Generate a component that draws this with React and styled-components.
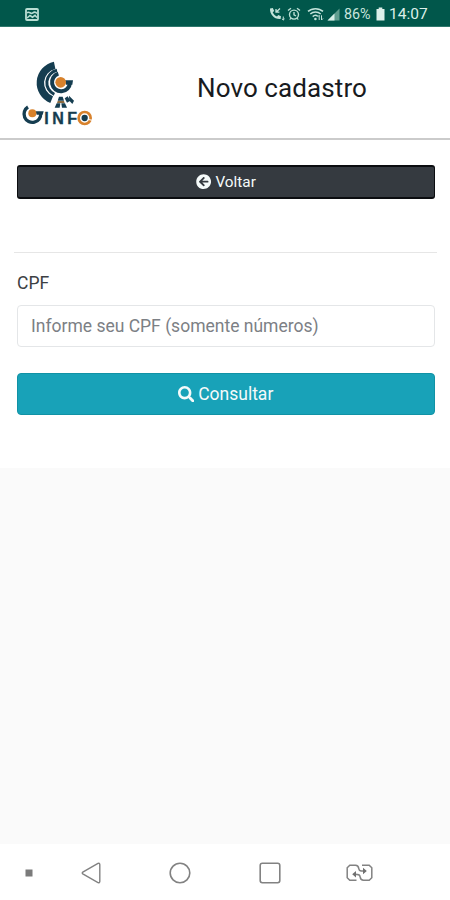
import React from 'react';
import styled, { createGlobalStyle } from 'styled-components';
import { FaArrowCircleLeft, FaSearch } from 'react-icons/fa';

const GlobalStyle = createGlobalStyle`
  * {
    box-sizing: border-box;
  }

  body {
    margin: 0;
    background: #fafafa;
    color: #212529;
    font-family: Roboto, 'Liberation Sans', sans-serif;
  }
`;

const Logo = () => (
  <svg width='73' height='66' viewBox='30 30 219 198' fill='none'>
    {/* dish arcs */}
    <path d='M134 46 A54 54 0 0 0 125 149' stroke='#153d50' strokeWidth='22' />
    <path d='M141 61 A38 38 0 0 0 133 133' stroke='#153d50' strokeWidth='9' />
    {/* big G */}
    <path d='M145 71 A27 27 0 1 0 180 98' stroke='#153d50' strokeWidth='12' />
    <path d='M165 91 H189 L187 104 H168Z' fill='#153d50' />
    <circle cx='152' cy='97' r='16' fill='#d8822c' />
    {/* tower */}
    <path d='M147 140 H158 L162 152 H143Z' fill='#153d50' />
    <path d='M143 153 H162 L164 159 H141Z' fill='#8a6a40' />
    <path d='M140 160 H151 L149 173 H134Z' fill='#153d50' />
    <path d='M154 160 H165 L171 173 H156Z' fill='#153d50' />
    <path d='M164 145 L173 139 L181 152 L171 158Z' fill='#153d50' />
    <path d='M177 137 L192 152 L187 162 L178 152Z' fill='#153d50' />
    {/* small G */}
    <path d='M54 171 A25 25 0 1 0 92 190' stroke='#153d50' strokeWidth='10' />
    <path d='M76 184 H101 L98 194 H80Z' fill='#153d50' />
    <circle cx='67' cy='190' r='12' fill='#d8822c' />
    <text
      x='103'
      y='223'
      fill='#153d50'
      fontFamily='Liberation Sans, sans-serif'
      fontSize='48'
      fontWeight='700'
      stroke='#153d50'
      strokeWidth='1'
      textLength='98'
      lengthAdjust='spacing'
    >
      INF
    </text>
    <circle cx='224' cy='204' r='18' stroke='#d8822c' strokeWidth='8' />
    <circle cx='224' cy='204' r='9.5' fill='#153d50' />
    <path d='M233 208 L247 211' stroke='#fff' strokeWidth='3' />
  </svg>
);

const PhotoIcon = () => (
  <svg width='14' height='13' viewBox='0 0 14 13' fill='none'>
    <rect x='1' y='1' width='12' height='11' rx='1' stroke='#b9ded3' strokeWidth='1.8' />
    <path
      d='M2 5 C4 2.5 5.5 6.5 7.5 5.2 C9 4 10.5 3.5 12 5.5 M2 10 L5 7.5 L7.5 9.2 L10 7.3 L12 9.5'
      stroke='#b9ded3'
      strokeWidth='1.6'
    />
  </svg>
);

const CallIcon = () => (
  <svg width='16' height='14' viewBox='0 0 16 14' fill='none'>
    <path
      d='M1 1.5 L3.8 1 L5.2 4 L3.7 5.3 C4.5 7.3 5.9 8.6 8 9.4 L9.3 8 L12 9.3 L11.6 12 C5.5 12.7 0.6 7.4 1 1.5Z'
      fill='#c3e3da'
    />
    <path d='M7 2 V5.2 H10.4 M7.2 5 L11 1.6' stroke='#c3e3da' strokeWidth='1.3' />
    <path d='M14.3 9.5 V13 M12.9 11.8 L14.3 13 L15.6 11.8' stroke='#c3e3da' />
  </svg>
);

const AlarmIcon = () => (
  <svg width='14' height='14' viewBox='0 0 14 14' fill='none' stroke='#b9ded3'>
    <circle cx='7' cy='7.6' r='4.5' strokeWidth='1.4' />
    <path d='M1 3.5 L4 1.2 M10 1.2 L13 3.5 M7 5 V7.8 L9 9' strokeWidth='1.4' />
    <path d='M3.8 11 L2.8 12.7 M10.2 11 L11.2 12.7' strokeWidth='1.1' />
  </svg>
);

const WifiIcon = () => (
  <svg width='17' height='14' viewBox='0 0 17 14' fill='none' stroke='#c3e3da'>
    <path d='M1 4.4 C5 0.7 12 0.7 16 4.4' strokeWidth='1.5' />
    <path d='M3.3 7 C6.2 4.3 10.8 4.3 13.7 7' strokeWidth='1.5' />
    <path d='M5.7 9.6 C7.3 8.1 9.3 8.1 10.7 9.3' strokeWidth='1.5' />
    <circle cx='8.4' cy='12' r='1.3' fill='#c3e3da' stroke='none' />
    <path d='M12.2 8.3 V13 M10.7 9.8 L12.2 8.3 M14.5 8.3 V13 L16 11.5' />
  </svg>
);

const SignalIcon = () => (
  <svg width='13' height='13' viewBox='0 0 13 13'>
    <path d='M0.5 12.5 L12.5 0.5 V12.5Z' fill='#5f9d8f' />
    <path d='M0.5 12.5 L7.5 5.5 V12.5Z' fill='#d6eee7' />
  </svg>
);

const BatteryIcon = () => (
  <svg width='9' height='14' viewBox='0 0 9 14'>
    <path d='M2.7 0.5 H6.3 V2 H8.5 V13.5 H0.5 V2 H2.7Z' fill='#dcefe9' />
  </svg>
);

const SwitchIcon = () => (
  <svg width='27' height='18' viewBox='0 0 27 18' fill='none' stroke='#828282'>
    <path
      d='M10.5 16.3 H3.8 L1.2 13.7 V3.8 L3.8 1.2 H9.5 C12.3 1.2 12.6 3 12.8 4.6 C13.2 7 14.5 7 18 7'
      strokeWidth='1.5'
    />
    <path
      d='M16 1.2 H23.2 L25.8 3.8 V13.7 L23.2 16.3 H17.5 C14.7 16.3 14.4 14.8 14.2 13.2 C13.8 10.5 12.4 10.3 9 10.3'
      strokeWidth='1.5'
    />
    <path d='M17 3.8 L20.8 7 L17 10.2Z M10 7.1 L6.2 10.3 L10 13.5Z' fill='#707070' stroke='none' />
  </svg>
);

const App = () => {
  return (
    <>
      <GlobalStyle />
      <Screen>
        <StatusBar>
          <PhotoIcon />
          <StatusGroup>
            <CallIcon />
            <AlarmIcon />
            <WifiIcon />
            <SignalIcon />
            <Battery>86%</Battery>
            <BatteryIcon />
            <Clock>14:07</Clock>
          </StatusGroup>
        </StatusBar>
        <Header>
          <Logo />
          <Title>Novo cadastro</Title>
        </Header>
        <Content>
          <Button $variant='dark'>
            <FaArrowCircleLeft />
            Voltar
          </Button>
          <Divider />
          <Form onSubmit={e => e.preventDefault()}>
            <Label htmlFor='cpf'>CPF</Label>
            <Input id='cpf' type='text' placeholder='Informe seu CPF (somente números)' />
            <Button $variant='info'>
              <FaSearch />
              Consultar
            </Button>
          </Form>
        </Content>
        <NavBar>
          <NavItem>
            <svg width='8' height='8'>
              <rect x='0.5' y='0.5' width='7' height='7' fill='#7b7b7b' />
            </svg>
          </NavItem>
          <NavItem>
            <svg width='20' height='22' viewBox='0 0 20 22' fill='none' stroke='#828282'>
              <path
                d='M17 1.3 L1.8 10.1 Q0.7 11 1.8 11.9 L17 20.7 Q18.6 21.2 18.8 19.5 V2.5 Q18.6 0.8 17 1.3Z'
                strokeWidth='1.4'
              />
            </svg>
          </NavItem>
          <NavItem>
            <svg width='22' height='22' fill='none' stroke='#828282'>
              <circle cx='11' cy='11' r='9.8' strokeWidth='1.6' />
            </svg>
          </NavItem>
          <NavItem>
            <svg width='22' height='22' fill='none' stroke='#828282'>
              <rect x='1.2' y='1.2' width='19.6' height='19.6' rx='2.2' strokeWidth='1.6' />
            </svg>
          </NavItem>
          <NavItem>
            <SwitchIcon />
          </NavItem>
        </NavBar>
      </Screen>
    </>
  );
};

const Screen = styled.div`
  display: flex;
  flex-direction: column;
  height: 900px;
  width: 450px;
  overflow: hidden;
`;

const StatusBar = styled.div`
  display: flex;
  align-items: center;
  justify-content: space-between;
  height: 27px;
  padding: 2px 23px 0 25px;
  background: #01574b;
  border-bottom: 1px solid #2f776c;

  svg {
    flex-shrink: 0;
  }
`;

const StatusGroup = styled.div`
  display: flex;
  align-items: center;

  svg:nth-of-type(2) {
    margin-left: 2px;
  }

  svg:nth-of-type(3) {
    margin-left: 6px;
  }

  svg:nth-of-type(4) {
    margin-left: 3px;
  }
`;

const Battery = styled.span`
  width: 27px;
  margin: 0 5px 0 4px;
  color: #c9e5dd;
  font-size: 14.3px;
  line-height: 16px;
`;

const Clock = styled.span`
  width: 38px;
  margin-left: 4px;
  color: #dcefe9;
  font-size: 15.5px;
  line-height: 16px;
`;

const Header = styled.header`
  display: flex;
  align-items: flex-start;
  height: 113px;
  padding: 33px 20px 0;
  background: #fff;
  border-bottom: 2px solid #cbcbcb;
`;

const Title = styled.h1`
  margin: 12px 0 0 104px;
  color: #181b1e;
  font-size: 26px;
  font-weight: 400;
  line-height: 32px;
  letter-spacing: 0.1px;
  white-space: nowrap;
`;

const Content = styled.main`
  height: 328px;
  padding: 25px 15px 0 17px;
  background: #fff;
`;

const Button = styled.button`
  display: flex;
  align-items: center;
  justify-content: center;
  gap: 4px;
  width: 100%;
  height: ${({ $variant }) => ($variant === 'dark' ? '34px' : '42px')};
  padding: 0;
  border: 1px solid ${({ $variant }) => ($variant === 'dark' ? '#0b0d10' : '#1192a5')};
  border-width: ${({ $variant }) => ($variant === 'dark' ? '2px 1px' : '1px')};
  border-radius: ${({ $variant }) => ($variant === 'dark' ? '3px' : '4px')};
  background: ${({ $variant }) => ($variant === 'dark' ? '#353a40' : '#18a2b8')};
  color: #f5fafa;
  font-family: inherit;
  font-size: ${({ $variant }) => ($variant === 'dark' ? '15.3px' : '17.5px')};
  cursor: pointer;

  svg {
    font-size: ${({ $variant }) => ($variant === 'dark' ? '15.3px' : '16.5px')};
    margin-left: ${({ $variant }) => ($variant === 'dark' ? '0' : '-1px')};
  }
`;

const Divider = styled.hr`
  height: 1px;
  margin: 53px -2px 0 -3px;
  border: none;
  background: #e6e6e6;
`;

const Form = styled.form`
  padding-top: 19px;
`;

const Label = styled.label`
  display: block;
  height: 33px;
  color: #3c4043;
  font-size: 17.5px;
  line-height: 23px;
`;

const Input = styled.input`
  display: block;
  width: 100%;
  height: 42px;
  margin-bottom: 26px;
  padding: 0 13px;
  border: 1px solid #e4e6e8;
  border-radius: 4px;
  outline: none;
  background: #fff;
  font-family: inherit;
  font-size: 17.5px;

  &::placeholder {
    color: #7c8085;
    opacity: 1;
  }
`;

const NavBar = styled.nav`
  display: grid;
  grid-template-columns: 57px 68px 110px 70px 109px;
  height: 56px;
  margin-top: auto;
  background: #fff;
`;

const NavItem = styled.div`
  display: flex;
  align-items: center;
  justify-content: center;
  padding-top: 1px;
`;

export default App;
